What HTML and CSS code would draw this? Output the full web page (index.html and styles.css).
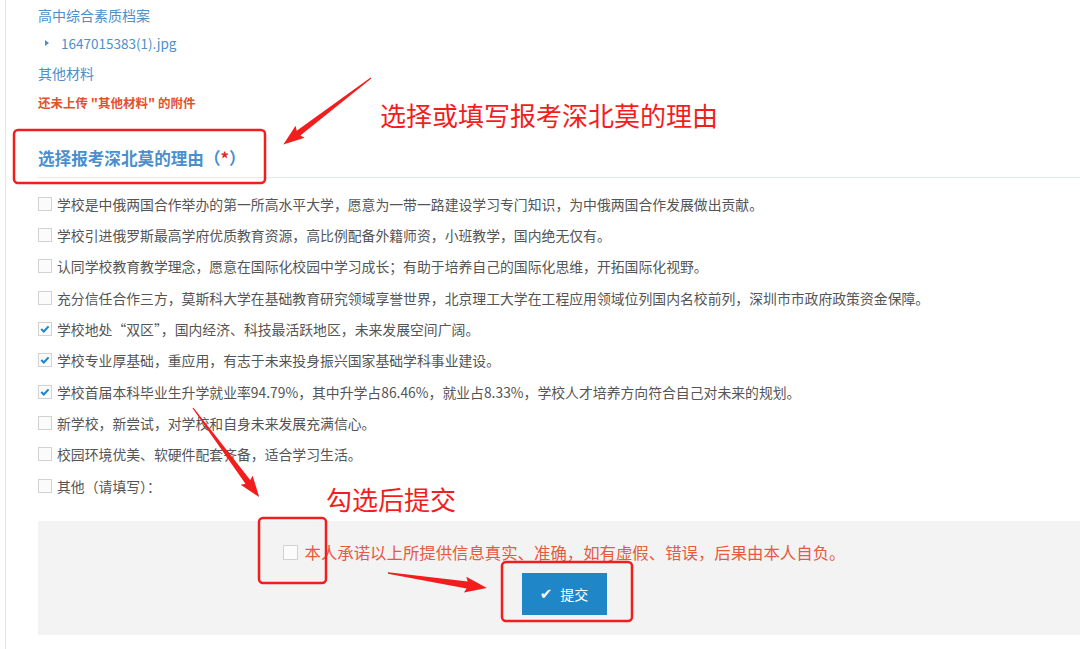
FILE: index.html
```html
<!DOCTYPE html>
<html>
    <head>
        <meta charset="UTF-8">
        <title>选择报考深北莫的理由</title>
        <link rel="stylesheet" href="styles.css">
    </head>
    <body>
        <div class="page">
            <!-- 附件 -->
            <div class="files">
                <p class="label lb1">高中综合素质档案</p>
                <p class="file"><span class="tri"></span>1647015383(1).jpg</p>
                <p class="label lb2">其他材料</p>
                <p class="warn">还未上传 "其他材料" 的附件</p>
            </div>

            <!-- 理由 -->
            <h3 class="tit">选择报考深北莫的理由（<em>*</em>）</h3>
            <ul class="opts">
                <li><span class="ck"></span>学校是中俄两国合作举办的第一所高水平大学，愿意为一带一路建设学习专门知识，为中俄两国合作发展做出贡献。</li>
                <li><span class="ck"></span>学校引进俄罗斯最高学府优质教育资源，高比例配备外籍师资，小班教学，国内绝无仅有。</li>
                <li><span class="ck"></span>认同学校教育教学理念，愿意在国际化校园中学习成长；有助于培养自己的国际化思维，开拓国际化视野。</li>
                <li><span class="ck"></span>充分信任合作三方，莫斯科大学在基础教育研究领域享誉世界，北京理工大学在工程应用领域位列国内名校前列，深圳市市政府政策资金保障。</li>
                <li><span class="ck on"><svg width="14" height="14" viewBox="0 0 14 14"><path d="M2.6 7 L5.6 9.9 L11.2 3.9" fill="none" stroke="#1d86cf" stroke-width="2.4"/></svg></span>学校地处“双区”，国内经济、科技最活跃地区，未来发展空间广阔。</li>
                <li><span class="ck on"><svg width="14" height="14" viewBox="0 0 14 14"><path d="M2.6 7 L5.6 9.9 L11.2 3.9" fill="none" stroke="#1d86cf" stroke-width="2.4"/></svg></span>学校专业厚基础，重应用，有志于未来投身振兴国家基础学科事业建设。</li>
                <li><span class="ck on"><svg width="14" height="14" viewBox="0 0 14 14"><path d="M2.6 7 L5.6 9.9 L11.2 3.9" fill="none" stroke="#1d86cf" stroke-width="2.4"/></svg></span>学校首届本科毕业生升学就业率94.79%，其中升学占86.46%，就业占8.33%，学校人才培养方向符合自己对未来的规划。</li>
                <li><span class="ck"></span>新学校，新尝试，对学校和自身未来发展充满信心。</li>
                <li><span class="ck"></span>校园环境优美、软硬件配套齐备，适合学习生活。</li>
                <li><span class="ck"></span>其他（请填写）：</li>
            </ul>

            <!-- 承诺 + 提交 -->
            <div class="foot">
                <p class="promise"><span class="ck"></span>本人承诺以上所提供信息真实、准确，如有虚假、错误，后果由本人自负。</p>
                <button class="btn"><span class="ok">✔</span>提交</button>
            </div>
        </div>

        <!-- 빨간 주석 -->
        <div class="notes">
            <svg width="1080" height="649" viewBox="0 0 1080 649">
                <g fill="none" stroke="#f21d1d" stroke-width="2.5">
                    <rect x="14" y="130" width="251" height="53" rx="4"/>
                    <rect x="259" y="518" width="67" height="65" rx="4"/>
                    <rect x="502" y="562" width="130" height="59" rx="4"/>
                </g>
                <g fill="#f21d1d">
                    <g transform="translate(371 78) rotate(142.8)">
                        <polygon points="0,-0.6 91,-3 89,-7.5 110,0 89,7.5 91,3 0,0.6"/>
                    </g>
                    <g transform="translate(193 408) rotate(53.4)">
                        <polygon points="0,-0.6 92,-3 90,-7.5 111,0 90,7.5 92,3 0,0.6"/>
                    </g>
                    <g transform="translate(388 573) rotate(8.6)">
                        <polygon points="0,-0.8 80,-3.5 78,-8 100,0 78,8 80,3.5 0,0.8"/>
                    </g>
                </g>
            </svg>
            <span class="note n1">选择或填写报考深北莫的理由</span>
            <span class="note n2">勾选后提交</span>
        </div>
    </body>
</html>
```

FILE: styles.css
```css
*{
    margin: 0;
    padding: 0;
    box-sizing: border-box;
}
body{
    width: 1080px;
    height: 649px;
    overflow: hidden;
    position: relative;
    background: #fff;
    font-family: "Microsoft YaHei", "Noto Sans CJK SC", sans-serif;
    color: #555;
}
/* 왼쪽 회색 선 */
.page{
    margin-left: 5px;
    border-left: 1px solid #e6e6e6;
    padding-left: 32px;
    height: 649px;
}
/* 첨부파일 */
.files{
    padding-top: 4px;
}
.label{
    font-size: 14px;
    color: #4d8fcb;
    height: 22px;
    line-height: 22px;
}
.lb2{
    margin-top: 8px;
}
.file{
    font-size: 13.5px;
    color: #4d8fcb;
    height: 22px;
    line-height: 22px;
    margin-top: 6px;
    padding-left: 7px;
    display: flex;
    align-items: center;
}
.tri{
    width: 0;
    height: 0;
    border-left: 4px solid #4d8fcb;
    border-top: 3.5px solid transparent;
    border-bottom: 3.5px solid transparent;
    margin-right: 12px;
}
.warn{
    margin-top: 10px;
    font-size: 12.5px;
    font-weight: bold;
    color: #e5502f;
    height: 18px;
    line-height: 18px;
}
/* 제목 */
.tit{
    margin-top: 35px;
    font-size: 16.6px;
    color: #4a8fcd;
    line-height: 22px;
    padding-bottom: 8px;
    border-bottom: 1px solid #e2e9f1;
}
.tit em{
    font-style: normal;
    color: #e52525;
}
/* 체크 항목 */
.opts{
    list-style: none;
    margin-top: 10px;
}
.opts li{
    height: 31.33px;
    display: flex;
    align-items: center;
    font-size: 13.85px;
    color: #555;
}
.ck{
    width: 14px;
    height: 14px;
    border: 1px solid #d2d2d2;
    background: #fbfbfb;
    margin-right: 5px;
    flex-shrink: 0;
    display: flex;
    align-items: center;
    justify-content: center;
}
.ck svg{
    display: block;
}
/* 하단 회색 박스 */
.foot{
    margin-top: 20px;
    width: 1052px;
    height: 114px;
    background: #f3f3f3;
    display: flex;
    flex-direction: column;
    align-items: center;
    padding-top: 21px;
}
.promise{
    display: flex;
    align-items: center;
    font-size: 16.4px;
    color: #e85a40;
    height: 20px;
    line-height: 20px;
}
.promise .ck{
    width: 15px;
    height: 15px;
    margin-right: 7px;
}
.btn{
    margin-top: 11px;
    width: 85px;
    height: 42px;
    border: none;
    background: #1f86c8;
    color: #fff;
    font-family: "Microsoft YaHei", "Noto Sans CJK SC", sans-serif;
    font-size: 14px;
    display: flex;
    align-items: center;
    justify-content: center;
}
.ok{
    font-family: "DejaVu Sans", sans-serif;
    font-size: 15px;
    margin-right: 8px;
}
/* 주석 레이어 */
.notes{
    position: absolute;
    left: 0;
    top: 0;
    width: 1080px;
    height: 649px;
    pointer-events: none;
}
.notes svg{
    display: block;
}
.note{
    position: absolute;
    font-size: 26px;
    line-height: 30px;
    color: #f21d1d;
    white-space: nowrap;
}
.n1{
    left: 380px;
    top: 100px;
}
.n2{
    left: 326px;
    top: 484px;
}
```
